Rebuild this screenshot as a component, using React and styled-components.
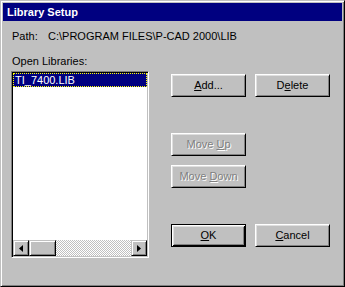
import React from "react";
import styled, { createGlobalStyle, css } from "styled-components";

const Global = createGlobalStyle`
  html, body { margin: 0; padding: 0; background: #c0c0c0; }
  body { font-family: "Liberation Sans", Arial, sans-serif; font-size: 11px; }
`;

const Window = styled.div`
  box-sizing: border-box;
  width: 345px;
  height: 287px;
  display: flex;
  flex-direction: column;
  background: #c0c0c0;
  border: 1px solid;
  border-color: #c0c0c0 #000 #000 #c0c0c0;
  box-shadow: inset 1px 1px #fff, inset -1px -1px #808080;
  padding: 2px;
  color: #000;
  font-family: "Liberation Sans", Arial, sans-serif;
  font-size: 11px;
  line-height: 13px;
`;

const TitleBar = styled.div`
  height: 18px;
  flex: none;
  display: flex;
  align-items: center;
  padding-left: 4px;
  background: #000080;
  color: #fff;
  font-weight: bold;
  font-size: 11px;
`;

const Content = styled.div`
  flex: 1;
  display: flex;
  flex-direction: column;
  padding: 9px 8px 0 8px;
`;

const PathRow = styled.div`
  display: flex;
  padding-left: 1px;
  height: 13px;
`;

const PathLabel = styled.span`
  width: 36px;
`;

const OpenLabel = styled.div`
  margin-top: 12px;
  padding-left: 1px;
  height: 13px;
`;

const Main = styled.div`
  display: flex;
  margin-top: 3px;
`;

const ListBox = styled.div`
  box-sizing: border-box;
  width: 138px;
  height: 187px;
  display: flex;
  flex-direction: column;
  background: #fff;
  border: 1px solid;
  border-color: #808080 #fff #fff #808080;
  box-shadow: inset 1px 1px #000, inset -1px -1px #c0c0c0;
  padding: 1px;
`;

const Items = styled.div`
  flex: 1;
`;

const Item = styled.div`
  height: 14px;
  line-height: 14px;
  padding-left: 2px;
  ${(p) =>
    p.$selected &&
    css`
      background: #000080;
      color: #fff;
      outline: 1px dotted #ffff00;
      outline-offset: -1px;
    `}
`;

const HScroll = styled.div`
  height: 16px;
  display: flex;
  background-color: #c0c0c0;
`;

const bevel = css`
  box-sizing: border-box;
  background: #c0c0c0;
  border: 1px solid;
  border-color: #c0c0c0 #000 #000 #c0c0c0;
  box-shadow: inset 1px 1px #fff, inset -1px -1px #808080;
`;

const ScrollBtn = styled.div`
  ${bevel};
  width: 16px;
  height: 16px;
  flex: none;
  display: flex;
  align-items: center;
  justify-content: center;
`;

const Thumb = styled.div`
  ${bevel};
  width: 27px;
  height: 16px;
  flex: none;
`;

const Track = styled.div`
  flex: 1;
  background-image: conic-gradient(#fff 25%, #c0c0c0 0 50%, #fff 0 75%, #c0c0c0 0);
  background-size: 2px 2px;
`;

const Side = styled.div`
  margin-left: 22px;
  display: flex;
  flex-direction: column;
  align-items: flex-start;
  padding-top: 3px;
`;

const Row = styled.div`
  display: flex;
  gap: 9px;
  margin-top: ${(p) => p.$mt || 0}px;
`;

const Button = styled.div`
  box-sizing: border-box;
  width: 75px;
  height: 23px;
  display: flex;
  align-items: center;
  justify-content: center;
  background: #c0c0c0;
  border: 1px solid;
  border-color: #fff #000 #000 #fff;
  box-shadow: inset 1px 1px #dfdfdf, inset -1px -1px #808080;
  margin-top: ${(p) => p.$mt || 0}px;
  color: ${(p) => (p.$disabled ? "#808080" : "#000")};
  text-shadow: ${(p) => (p.$disabled ? "1px 1px #fff" : "none")};
  ${(p) =>
    p.$default &&
    css`
      border: 1px solid #000;
      box-shadow: inset 1px 1px #fff, inset -1px -1px #000, inset 2px 2px #dfdfdf,
        inset -2px -2px #808080;
    `}
  u {
    text-decoration-thickness: 1px;
    text-underline-offset: 1px;
  }
`;

const Arrow = ({ dir }) => (
  <svg width="4" height="7" viewBox="0 0 4 7" style={{ display: "block" }}>
    {dir === "left" ? (
      <path d="M4 0 L0 3.5 L4 7 Z" fill="#000" />
    ) : (
      <path d="M0 0 L4 3.5 L0 7 Z" fill="#000" />
    )}
  </svg>
);

export default function App() {
  return (
    <>
      <Global />
      <Window>
        <TitleBar>Library Setup</TitleBar>
        <Content>
          <PathRow>
            <PathLabel>Path:</PathLabel>
            <span>{"C:\\PROGRAM FILES\\P-CAD 2000\\LIB"}</span>
          </PathRow>
          <OpenLabel>Open Libraries:</OpenLabel>
          <Main>
            <ListBox>
              <Items>
                <Item $selected>TI_7400.LIB</Item>
              </Items>
              <HScroll>
                <ScrollBtn>
                  <Arrow dir="left" />
                </ScrollBtn>
                <Thumb />
                <Track />
                <ScrollBtn>
                  <Arrow dir="right" />
                </ScrollBtn>
              </HScroll>
            </ListBox>
            <Side>
              <Row>
                <Button>
                  <span>
                    <u>A</u>dd...
                  </span>
                </Button>
                <Button>
                  <span>
                    D<u>e</u>lete
                  </span>
                </Button>
              </Row>
              <Button $mt={36} $disabled>
                <span>
                  Move <u>U</u>p
                </span>
              </Button>
              <Button $mt={9} $disabled>
                <span>
                  Move <u>D</u>own
                </span>
              </Button>
              <Row $mt={36}>
                <Button $default>
                  <span>
                    <u>O</u>K
                  </span>
                </Button>
                <Button>
                  <span>
                    <u>C</u>ancel
                  </span>
                </Button>
              </Row>
            </Side>
          </Main>
        </Content>
      </Window>
    </>
  );
}
